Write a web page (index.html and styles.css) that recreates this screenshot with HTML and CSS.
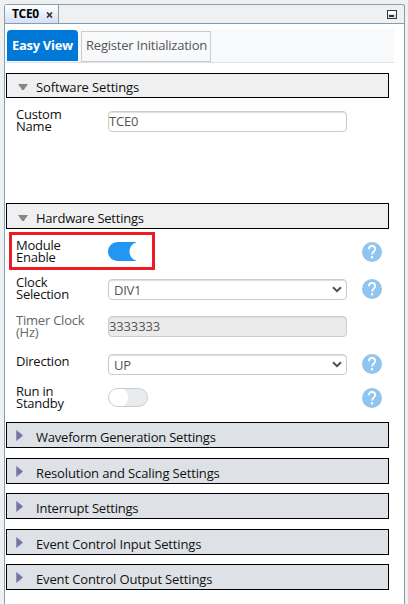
FILE: index.html
```html
<!DOCTYPE html>
<html lang="en">
<head>
<meta charset="utf-8">
<title>TCE0</title>
<link rel="stylesheet" href="styles.css">
</head>
<body>
<svg class="defs" width="0" height="0" aria-hidden="true">
  <symbol id="help" viewBox="0 0 20 20">
    <circle cx="10" cy="10" r="10" fill="#90c5f0"/>
    <path d="M6.9 7.2C6.9 5.3 8.2 4 10 4s3.2 1.2 3.2 3c0 2.5-3.1 2.8-3.1 5.6" fill="none" stroke="#fff" stroke-width="1.8"/>
    <rect x="9" y="14.2" width="2.1" height="2.2" fill="#fff"/>
  </symbol>
  <symbol id="chevron" viewBox="0 0 10 7">
    <path d="M1 1.3l4 3.8 4-3.8" fill="none" stroke="#505050" stroke-width="2"/>
  </symbol>
  <symbol id="down" viewBox="0 0 10 6"><path d="M0 0h10L5.8 6H4.2z" fill="#858585"/></symbol>
  <symbol id="right" viewBox="0 0 7 11"><path d="M.5.5L6.3 5v1L.5 10.5z" fill="#77777f" stroke="#8c8ce0" stroke-width="1"/></symbol>
</svg>
<main class="panel">
  <header class="titlebar">
    <div class="file-tab"><span class="file-name">TCE0</span>
      <svg class="close" viewBox="0 0 7 6"><path d="M1 .5l5 5M6 .5l-5 5" stroke="#333" stroke-width="1.7"/></svg>
    </div>
    <svg class="minimize" viewBox="0 0 10 9"><rect x=".5" y=".5" width="9" height="8" fill="#fff" stroke="#34363f"/><path d="M1 4h8v4H1z" fill="#ddd"/><path d="M2 5h5v2H2z" fill="#34363f"/></svg>
  </header>
  <nav class="tabs">
    <div class="tab active"><span class="t-easy">Easy View</span></div>
    <div class="tab"><span class="t-reg">Register Initialization</span></div>
  </nav>

  <section class="software">
    <h2 class="bar open"><svg><use href="#down"/></svg><span>Software Settings</span></h2>
    <div class="row custom"><label>Custom<br>Name</label><div class="input">TCE0</div></div>
  </section>

  <section class="hardware">
    <h2 class="bar open snug"><svg><use href="#down"/></svg><span>Hardware Settings</span></h2>
    <div class="row module"><label>Module<br>Enable</label><div class="control"><div class="toggle on"></div></div><svg class="help"><use href="#help"/></svg><div class="highlight"></div></div>
    <div class="row clock"><label>Clock<br>Selection</label><div class="input select"><span>DIV1</span><svg><use href="#chevron"/></svg></div><svg class="help"><use href="#help"/></svg></div>
    <div class="row timer"><label>Timer Clock<br>(Hz)</label><div class="input disabled">3333333</div></div>
    <div class="row direction"><label>Direction</label><div class="input select"><span>UP</span><svg><use href="#chevron"/></svg></div><svg class="help"><use href="#help"/></svg></div>
    <div class="row standby"><label>Run in<br>Standby</label><div class="control"><div class="toggle"></div></div><svg class="help"><use href="#help"/></svg></div>
  </section>

  <section class="groups">
    <h2 class="bar snug"><svg><use href="#right"/></svg><span>Waveform Generation Settings</span></h2>
    <h2 class="bar wide-gap"><svg><use href="#right"/></svg><span>Resolution and Scaling Settings</span></h2>
    <h2 class="bar snug"><svg><use href="#right"/></svg><span>Interrupt Settings</span></h2>
    <h2 class="bar wide-gap"><svg><use href="#right"/></svg><span>Event Control Input Settings</span></h2>
    <h2 class="bar"><svg><use href="#right"/></svg><span>Event Control Output Settings</span></h2>
  </section>
</main>
</body>
</html>
```

FILE: styles.css
```css
* { box-sizing: border-box; }
body {
  margin: 0;
  height: 604px;
  overflow: hidden;
  padding: 4px 3px 0 4px;
  background: #f0f0f0;
  color: #111;
  font: 13px/18px "Open Sans", "Noto Sans", sans-serif;
}
svg { display: block; }
.defs { position: absolute; }
.panel {
  height: 600px;
  border: 1px solid #829fb8;
  border-bottom: 0;
  border-radius: 3px 3px 0 0;
  background: #fff;
}
.titlebar {
  display: flex;
  justify-content: space-between;
  height: 19px;
  border-bottom: 1px solid #7f9db9;
  background: #f0f0f0;
  border-radius: 3px 3px 0 0;
}
.file-tab {
  display: flex;
  align-items: center;
  width: 54px;
  height: 18px;
  padding-left: 7px;
  border-right: 1px solid #829fb8;
  background: linear-gradient(#fff, #d5dff5);
  color: #000;
}
.file-name { width: 34px; font-size: 12px; font-weight: 700; letter-spacing: -.35px; }
.close { width: 7px; height: 6px; margin-top: 1px; }
.minimize { width: 10px; height: 9px; margin: 5px 7px 0 0; }
.tabs {
  display: flex;
  align-items: flex-start;
  width: 388px;
  height: 34px;
  margin: 5px 0 0 1px;
  padding: 1px 0 0 1px;
  gap: 3px;
  border-bottom: 1px solid #dee2e6;
  background: #f8f9fb;
}
.tab {
  display: flex;
  align-items: center;
  width: 130px;
  height: 31px;
  margin-top: 1px;
  padding: 0 0 3px 4px;
  border: 1px solid #ccc;
  color: #555;
  white-space: nowrap;
}
.tab.active {
  width: 71px;
  margin-top: 0;
  height: 31px;
  padding: 0 0 2px 5px;
  border: 0;
  border-radius: 4px 4px 0 0;
  background: #0078d7;
  color: #fff;
  font-weight: 700;
}
.t-easy { letter-spacing: -.3px; }
.t-reg { letter-spacing: -.22px; }
.bar {
  display: flex;
  width: 383px;
  height: 26px;
  margin: 0 0 9px 1px;
  padding: 5px 0 0 9px;
  border: 1px solid #000;
  background: #dee2e6;
  font-size: 13px;
  font-weight: 400;
  letter-spacing: -.14px;
  white-space: nowrap;
}
.bar.snug { letter-spacing: -.22px; }
.bar.wide-gap { margin: 10px 0 9px 1px; }
.bar svg { width: 7px; height: 11px; margin: 2px 13px 0 0; }
.bar.open { background: #f0f0f0; margin-bottom: 10px; }
.bar.open svg { width: 10px; height: 6px; margin: 6px 8px 0 2px; }
.software { height: 140px; padding-top: 10px; }
.software .bar { height: 25px; padding-top: 4px; }
.row {
  position: relative;
  display: grid;
  grid-template-columns: 92px 239px 20px;
  column-gap: 0;
  align-items: start;
  margin-left: 11px;
}
.row label { line-height: 12px; letter-spacing: -.22px; }
.help { width: 20px; height: 20px; margin-left: 15px; }
.input {
  display: flex;
  align-items: center;
  justify-content: space-between;
  height: 21px;
  padding-bottom: 1px;
  border: 1px solid #ccc;
  border-radius: 4px;
  box-shadow: inset 0 1px 1px #ddd;
  color: #555;
  letter-spacing: -.15px;
}
.select { padding: 0 4px 0 5px; letter-spacing: -.3px; }
.select svg { width: 10px; height: 7px; margin-top: -1px; }
.disabled { background: #ebebeb; }
.timer label { color: #666; }
.toggle {
  width: 40px;
  height: 19px;
  border: 1px solid #ccc;
  border-radius: 10px;
  background: radial-gradient(circle at 9px 8.5px, #fff 9.5px, #e9ecef 10.5px);
}
.toggle.on {
  border: 0;
  background: radial-gradient(circle at 31px 9.5px, #fff 9px, #2196f3 10px);
  clip-path: inset(0 12px 0 0);
}
.highlight {
  position: absolute;
  left: -7px;
  top: -7px;
  width: 146px;
  height: 38px;
  border: 3px solid #ed1c24;
}
.custom { margin-top: 10px; }
.custom .input { margin-top: 3px; }
.module { height: 37px; }
.module .toggle, .module .help { margin-top: 3px; }
.clock { height: 38px; }
.clock .input, .clock .help { margin-top: 3px; }
.timer { height: 40px; }
.timer .input { margin-top: 2px; }
.direction { height: 31px; }
.direction label { margin-top: 1px; }
.standby { height: 37px; }
.standby .toggle, .standby .help { margin-top: 3px; }
```
